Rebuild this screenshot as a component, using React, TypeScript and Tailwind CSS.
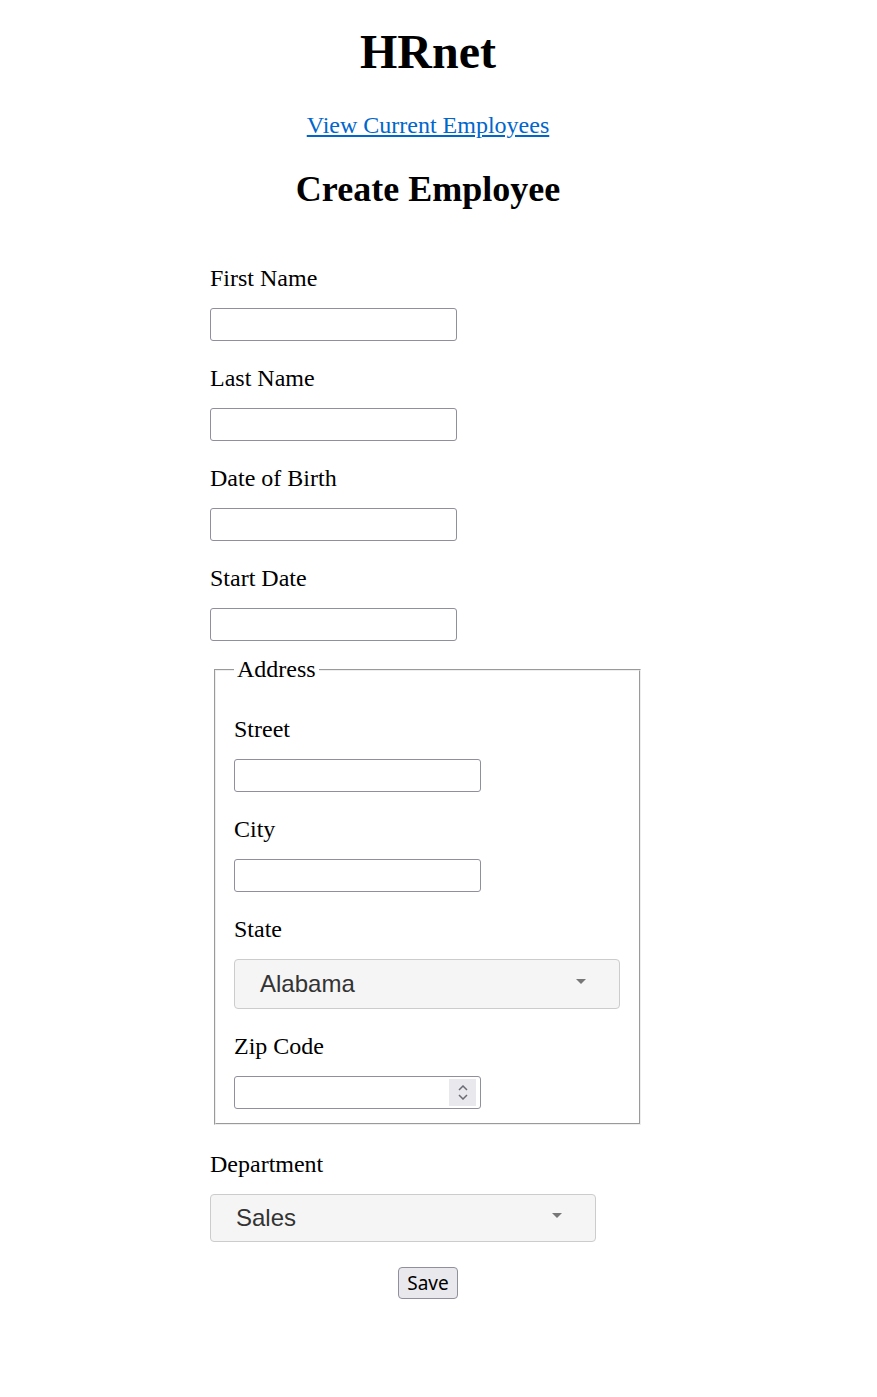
const states = ['Alabama'];

function Field({ label }: { label: string }) {
  return (
    <div>
      <label className="mt-[24px] mb-[16px] block leading-[27px]">{label}</label>
      <input
        type="text"
        className="block h-[33px] w-[247px] rounded-[3px] border border-[#8f8f9d] bg-white"
      />
    </div>
  );
}

function FakeSelect({ value, height }: { value: string; height: string }) {
  return (
    <div
      className={`flex w-[386px] ${height} items-center justify-between rounded-[4px] border border-[#cccccc] bg-[#f5f5f5] pl-[25px] pr-[33px] font-['Liberation_Sans',Arial,sans-serif] text-[24px] leading-[28px] text-[#333333]`}
    >
      <span>{value}</span>
      <svg width="10" height="5" viewBox="0 0 10 5" className="mt-[-5px]">
        <path d="M0 0h10L5 5z" fill="#777777" />
      </svg>
    </div>
  );
}

export default function App() {
  return (
    <div className="w-[856px] bg-white pt-[24px] font-['Liberation_Serif','Times_New_Roman',serif] text-[24px] text-black">
      <h1 className="text-center text-[48px] font-bold leading-[55px]">HRnet</h1>
      <div className="mt-[32px] text-center leading-[28px]">
        <a href="#" className="text-[#0066cc] underline">
          View Current Employees
        </a>
      </div>
      <h2 className="mt-[30px] text-center text-[36px] font-bold leading-[41px]">Create Employee</h2>

      <form className="mx-auto w-[436px] pt-[31px]">
        <Field label="First Name" />
        <Field label="Last Name" />
        <Field label="Date of Birth" />
        <Field label="Start Date" />

        <fieldset className="mt-[15px] ml-[4px] mr-[5px] border-2 border-[#eeeeee] px-[18px] pt-[9px] pb-[14px] [border-style:groove]">
          <legend className="px-[3px] leading-[27px]">Address</legend>
          <Field label="Street" />
          <Field label="City" />
          <div>
            <label className="mt-[24px] mb-[16px] block leading-[27px]">State</label>
            <FakeSelect value={states[0]} height="h-[50px]" />
          </div>
          <div>
            <label className="mt-[24px] mb-[16px] block leading-[27px]">Zip Code</label>
            <div className="relative w-[247px]">
              <input
                type="text"
                className="block h-[33px] w-[247px] rounded-[3px] border border-[#8f8f9d] bg-white"
              />
              <div className="absolute top-[3px] right-[5px] flex h-[27px] w-[27px] flex-col items-center justify-center gap-[3px] bg-[#e9e9ed]">
                <svg width="10" height="6" viewBox="0 0 10 6">
                  <path d="M1 5l4-4 4 4" fill="none" stroke="#6b6b75" strokeWidth="1.5" />
                </svg>
                <svg width="10" height="6" viewBox="0 0 10 6">
                  <path d="M1 1l4 4 4-4" fill="none" stroke="#6b6b75" strokeWidth="1.5" />
                </svg>
              </div>
            </div>
          </div>
        </fieldset>

        <div>
          <label className="mt-[26px] mb-[16px] block leading-[27px]">Department</label>
          <FakeSelect value="Sales" height="h-[48px]" />
        </div>

        <button
          type="button"
          className="mx-auto mt-[25px] block h-[32px] w-[60px] rounded-[4px] border border-[#8f8f9d] bg-[#e9e9ed] font-['Noto_Sans',sans-serif] text-[19px] leading-[28px] text-black"
        >
          Save
        </button>
      </form>
    </div>
  );
}
